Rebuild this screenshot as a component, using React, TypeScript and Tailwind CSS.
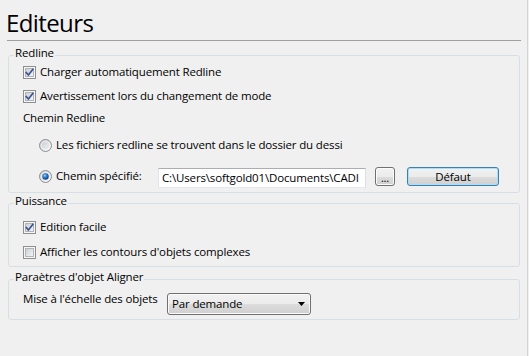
import React from "react";

function Checkbox({ checked }: { checked: boolean }) {
  return (
    <svg width="13" height="13" viewBox="0 0 13 13" className="shrink-0">
      <defs>
        <linearGradient id="cbin" x1="0" y1="0" x2="1" y2="1">
          <stop offset="0" stopColor="#c9ccd1" />
          <stop offset="1" stopColor="#f7f7f7" />
        </linearGradient>
      </defs>
      <rect x="0.5" y="0.5" width="12" height="12" fill="#f6f6f6" stroke="#8e8f8f" />
      <rect x="2.5" y="2.5" width="8" height="8" fill="url(#cbin)" stroke="#b1b5bb" />
      {checked && (
        <path d="M3.3 6.6 L5.4 9 L9.8 3.4" fill="none" stroke="#3d5492" strokeWidth="1.7" strokeLinecap="square" />
      )}
    </svg>
  );
}

function Radio({ checked }: { checked: boolean }) {
  return (
    <svg width="13" height="13" viewBox="0 0 13 13" className="shrink-0">
      <defs>
        <linearGradient id="rdo" x1="0" y1="0" x2="1" y2="1">
          <stop offset="0" stopColor="#c3c6cb" />
          <stop offset="1" stopColor="#f8f8f8" />
        </linearGradient>
        <radialGradient id="rdsel" cx="0.4" cy="0.35" r="0.7">
          <stop offset="0" stopColor="#9fd3fb" />
          <stop offset="0.45" stopColor="#2a78c8" />
          <stop offset="1" stopColor="#0e3a72" />
        </radialGradient>
      </defs>
      <circle cx="6.5" cy="6.5" r="6" fill="url(#rdo)" stroke="#8e8f8f" />
      <circle cx="6.5" cy="6.5" r="4.3" fill="none" stroke="#ffffff" strokeOpacity="0.6" />
      {checked && <circle cx="6.5" cy="6.5" r="3.2" fill="url(#rdsel)" />}
    </svg>
  );
}

function CheckRow({ checked, label, className = "" }: { checked: boolean; label: string; className?: string }) {
  return (
    <div className={`flex items-start h-[13px] gap-[4px] ${className}`}>
      <Checkbox checked={checked} />
      <span className="leading-[11px] whitespace-nowrap">{label}</span>
    </div>
  );
}

function Group({ title, className = "", children }: { title: string; className?: string; children: React.ReactNode }) {
  return (
    <fieldset className={`ml-[8px] w-[512px] border border-[#d5dfe5] rounded-[3px] ${className}`}>
      <legend className="ml-[5px] px-[1px] leading-[16px] pb-[4px]">{title}</legend>
      <div className="pl-[14px]">{children}</div>
    </fieldset>
  );
}

const btn =
  "h-[19px] rounded-[3px] border bg-[linear-gradient(to_bottom,#f2f2f2_0%,#ebebeb_50%,#dddddd_51%,#cfcfcf_100%)] flex items-center justify-center";

export default function App() {
  return (
    <div className="w-[529px] h-[356px] bg-[#f0f0f0] overflow-hidden font-['Open_Sans',sans-serif] text-[11.5px] tracking-[-0.15px] text-black">
      <div className="w-[528px] h-full border-r border-[#d4d4d4] pl-[7px] pt-[7px]">
        <div className="w-[514px] h-[34px] border-b border-[#a0a0a0]">
          <div className="text-[24px] leading-[32px] tracking-[-0.6px] -ml-[1px]">Editeurs</div>
        </div>

        <div className="-ml-[7px]">
          <Group title="Redline" className="mt-[4px] pb-[4px]">
            <CheckRow checked label="Charger automatiquement Redline" className="mt-[1px]" />
            <CheckRow checked label="Avertissement lors du changement de mode" className="mt-[11px]" />
            <div className="mt-[7px] leading-[16px]">Chemin Redline</div>
            <div className="mt-[13px] ml-[16px] flex items-start h-[13px] gap-[4px]">
              <Radio checked={false} />
              <span className="leading-[11px] whitespace-nowrap">Les fichiers redline se trouvent dans le dossier du dessi</span>
            </div>
            <div className="mt-[16px] ml-[16px] flex items-start h-[20px]">
              <div className="mt-[2px] flex items-start gap-[4px] w-[119px]">
                <Radio checked />
                <span className="leading-[11px] whitespace-nowrap">Chemin spécifié:</span>
              </div>
              <div className="w-[208px] h-[20px] bg-white border border-[#abadb3] border-l-[#e2e3ea] border-r-[#dbdfe6] border-b-[#e3e9ef] pl-[3px] overflow-hidden whitespace-nowrap leading-[18px]">
                C:\Users\softgold01\Documents\CADI
              </div>
              <div className={`${btn} ml-[9px] -mt-[1px] w-[20px] border-[#707070] shadow-[inset_0_0_0_1px_#fbfbfb]`}>
                <span className="leading-[12px] text-[11px] pt-[2px]">...</span>
              </div>
              <div className={`${btn} ml-[12px] -mt-[1px] w-[92px] border-[#3c7fb1] shadow-[inset_0_0_0_1px_#a9def6]`}>
                <span className="leading-[16px]">Défaut</span>
              </div>
            </div>
          </Group>

          <Group title="Puissance" className="pb-[7px]">
            <CheckRow checked label="Edition facile" className="mt-[8px]" />
            <CheckRow checked={false} label="Afficher les contours d'objets complexes" className="mt-[12px]" />
          </Group>

          <Group title="Paraètres d'objet Aligner" className="mt-[2px] pb-[4px]">
            <div className="mt-[4px] flex items-start">
              <span className="w-[144px] leading-[12px] whitespace-nowrap">Mise à l'échelle des objets</span>
              <div className="w-[144px] h-[22px] rounded-[3px] border border-[#707070] bg-[linear-gradient(to_bottom,#f2f2f2_0%,#ebebeb_50%,#dddddd_51%,#cfcfcf_100%)] shadow-[inset_0_0_0_1px_#fbfbfb] flex items-center justify-between pl-[4px] pr-[5px]">
                <span className="leading-[20px]">Par demande</span>
                <svg width="7" height="4" viewBox="0 0 7 4">
                  <path d="M0 0 H7 L3.5 4 Z" fill="#000" />
                </svg>
              </div>
            </div>
          </Group>
        </div>
      </div>
    </div>
  );
}
